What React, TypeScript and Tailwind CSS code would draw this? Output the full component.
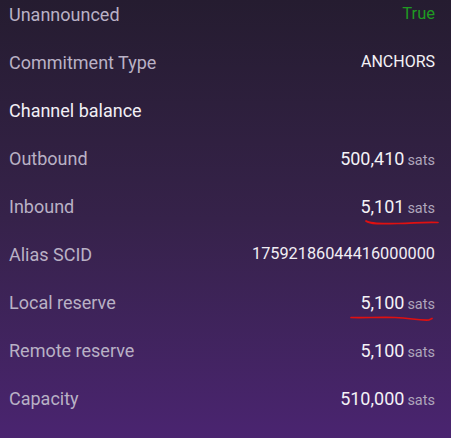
import React from "react";

type Row = {
  label: string;
  value?: string;
  unit?: string;
  kind?: "green" | "text" | "header" | "mono";
  mark?: "inbound" | "local";
};

const ROWS: Row[] = [
  { label: "Unannounced", value: "True", kind: "green" },
  { label: "Commitment Type", value: "ANCHORS", kind: "text" },
  { label: "Channel balance", kind: "header" },
  { label: "Outbound", value: "500,410", unit: "sats" },
  { label: "Inbound", value: "5,101", unit: "sats", mark: "inbound" },
  { label: "Alias SCID", value: "17592186044416000000", kind: "mono" },
  { label: "Local reserve", value: "5,100", unit: "sats", mark: "local" },
  { label: "Remote reserve", value: "5,100", unit: "sats" },
  { label: "Capacity", value: "510,000", unit: "sats" },
];

function Scribble({ mark }: { mark: "inbound" | "local" }) {
  // hand-drawn red underline
  if (mark === "inbound") {
    return (
      <svg
        className="pointer-events-none absolute right-[-5px] top-[26px]"
        width="76"
        height="8"
        viewBox="0 0 76 8"
      >
        <path
          d="M2 2 C 6 5, 16 5, 34 4.5 S 60 3, 74 3.5"
          fill="none"
          stroke="#e01010"
          strokeWidth="1.7"
          strokeLinecap="round"
        />
      </svg>
    );
  }
  return (
    <svg
      className="pointer-events-none absolute right-[0px] top-[26px]"
      width="86"
      height="8"
      viewBox="0 0 86 8"
    >
      <path
        d="M2 2.5 C 14 3, 30 2, 46 2.5 S 68 5.5, 80 5 L 83 3.5"
        fill="none"
        stroke="#e01010"
        strokeWidth="1.7"
        strokeLinecap="round"
      />
    </svg>
  );
}

export default function App() {
  return (
    <div
      className="h-[438px] w-[451px] overflow-hidden bg-gradient-to-b from-[#251c30] via-[#36224a] to-[#4a2470]"
      style={{ fontFamily: "Roboto, 'Noto Sans', sans-serif" }}
    >
      <div className="mt-[-10px] flex flex-col pl-[9px] pr-[16px]">
        {ROWS.map((r) => (
          <div key={r.label} className="flex h-12 items-center justify-between">
            <span
              className={
                r.kind === "header"
                  ? "text-[18px] text-[#f2eff5]"
                  : "text-[18px] text-[#b9b1c5]"
              }
            >
              {r.label}
            </span>
            {r.value && (
              <span className="relative flex items-baseline">
                {r.kind === "green" ? (
                  <span className="text-[16.5px] text-[#1f9a22]">{r.value}</span>
                ) : r.kind === "text" ? (
                  <span className="text-[16px] text-[#f4f2f6]">{r.value}</span>
                ) : r.kind === "mono" ? (
                  <span className="text-[16.3px] text-[#f1eef4]">{r.value}</span>
                ) : (
                  <>
                    <span className="text-[18px] text-[#f4f2f6]">{r.value}</span>
                    <span className="ml-[3px] text-[14.5px] text-[#aea6bb]">{r.unit}</span>
                  </>
                )}
                {r.mark && <Scribble mark={r.mark} />}
              </span>
            )}
          </div>
        ))}
      </div>
    </div>
  );
}
